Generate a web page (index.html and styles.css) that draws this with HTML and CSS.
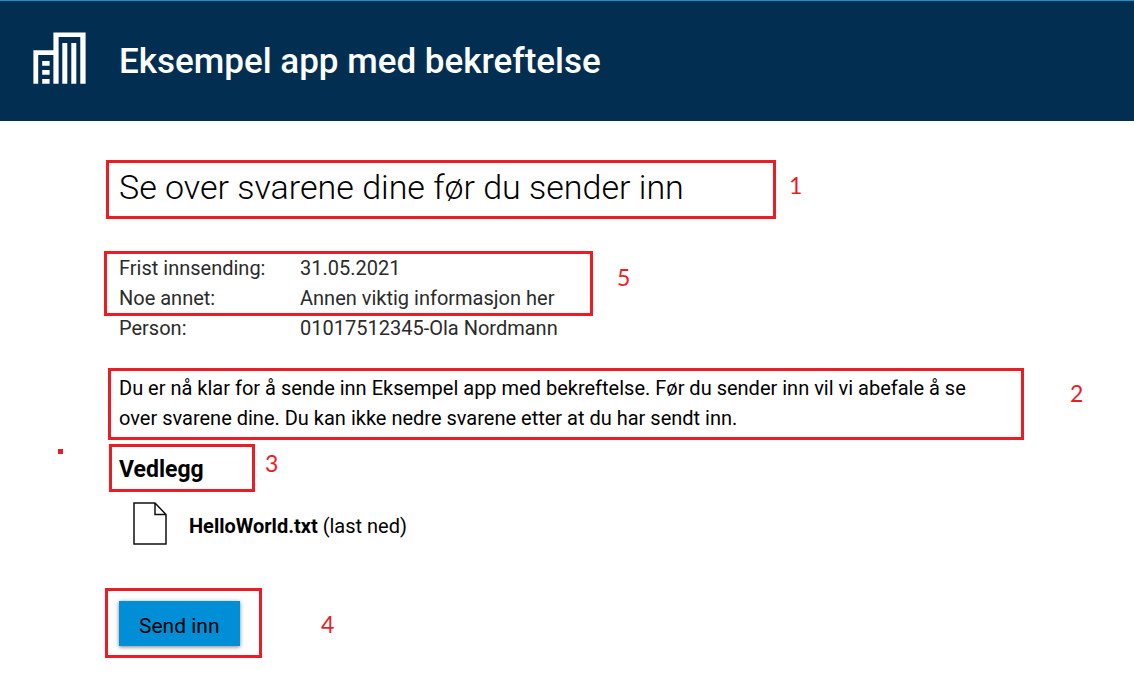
FILE: index.html
```html
<!DOCTYPE html>
<html lang="nb">
<head>
  <meta charset="utf-8">
  <meta name="viewport" content="width=device-width, initial-scale=1">
  <title>Eksempel app med bekreftelse</title>
  <link rel="stylesheet" href="styles.css">
</head>
<body>
  <header class="app-header">
    <svg class="app-logo" viewBox="0 0 53 52" aria-hidden="true">
      <path fill="#fff" d="M.4 51.700V18.200H20.400V.4H52.600V51.700H47.300V5H25.600V51.700H20.400V23H5.200V51.700Z"/>
      <path fill="#fff" d="M9.200 29h7.400v4.700H9.200zM9.200 38h7.400v4.700H9.200zM9.200 47h7.400v4.700H9.200zM29.300 11h5v40.700h-5zM38.300 11h5v40.700h-5z"/>
    </svg>
    <h1 class="app-title">Eksempel app med bekreftelse</h1>
  </header>

  <main class="page">
    <section class="marked">
      <h2 class="page-title">Se over svarene dine før du sender inn</h2>
      <div class="mark mark-title"><span class="mark-number">1</span></div>
    </section>

    <section class="marked summary-section">
      <table class="summary">
        <tbody>
          <tr><th scope="row">Frist innsending:</th><td>31.05.2021</td></tr>
          <tr><th scope="row">Noe annet:</th><td>Annen viktig informasjon her</td></tr>
          <tr><th scope="row">Person:</th><td>01017512345-Ola Nordmann</td></tr>
        </tbody>
      </table>
      <div class="mark mark-summary"><span class="mark-number">5</span></div>
    </section>

    <section class="marked intro-section">
      <p class="intro">Du er nå klar for å sende inn Eksempel app med bekreftelse. Før du sender inn vil vi abefale å se over svarene dine. Du kan ikke nedre svarene etter at du har sendt inn.</p>
      <div class="mark mark-intro"><span class="mark-number">2</span></div>
    </section>

    <section class="marked attachments-section">
      <h3 class="section-title">Vedlegg</h3>
      <div class="mark mark-attachments"><span class="mark-number">3</span></div>
      <div class="mark-dot"></div>
      <a class="file" href="#">
        <svg class="file-icon" viewBox="0 0 34 43" aria-hidden="true">
          <path fill="#fff" stroke="#111" stroke-width="1.5" d="M1 1H22L33 12.500V42H1ZM22 1V12.500H33"/>
        </svg>
        <span class="file-label"><strong>HelloWorld.txt</strong> (last ned)</span>
      </a>
    </section>

    <section class="marked submit-section">
      <button class="submit" type="button">Send inn</button>
      <div class="mark mark-submit"><span class="mark-number">4</span></div>
    </section>
  </main>
</body>
</html>
```
FILE: styles.css
```css
* {
  box-sizing: border-box;
}

body {
  margin: 0;
  background: #fff;
  color: #000;
  font-family: Roboto, "Liberation Sans", sans-serif;
  font-size: 20px;
  line-height: 30px;
}

h1,
h2,
h3,
p {
  margin: 0;
}

.app-header {
  display: flex;
  align-items: center;
  gap: 33px;
  padding: 31px 33px 29px;
  border-top: 1px solid #1c8fd0;
  background: #022f51;
  color: #fff;
}

.app-logo {
  width: 53px;
  height: 52px;
  margin-bottom: 8px;
}

.app-title {
  font-size: 35px;
  font-weight: 500;
  line-height: 60px;
}

.page {
  padding: 46px 119px 40px;
}

.page-title {
  font-size: 34px;
  font-weight: 300;
  line-height: 40px;
}

.summary-section {
  margin-top: 46px;
}

.summary {
  border-collapse: collapse;
  color: #2b2b2b;
}

.summary th,
.summary td {
  padding: 0;
  font-weight: 400;
  text-align: left;
}

.summary th {
  width: 181px;
}

.intro-section {
  margin-top: 30px;
}

.intro {
  padding-right: 20px;
}

.attachments-section {
  margin-top: 22px;
}

.section-title {
  font-size: 23px;
  font-weight: 700;
}

.file {
  display: flex;
  align-items: center;
  gap: 22px;
  width: fit-content;
  margin: 17px 0 0 14px;
  color: inherit;
  text-decoration: none;
}

.file-icon {
  width: 34px;
  height: 43px;
}

.file-label {
  padding-top: 4px;
}

.submit-section {
  display: flex;
  margin-top: 56px;
}

.submit {
  padding: 10px 20px 5px;
  border: 0;
  background: #008fd6;
  box-shadow: 0 1px 4px rgba(0, 0, 0, 0.5);
  color: #000;
  font: inherit;
  font-size: 21px;
  cursor: pointer;
}

/* Numbered callouts laid over the page */
.marked {
  position: relative;
}

.mark {
  position: absolute;
  border: 3px solid #ed1c24;
  pointer-events: none;
}

.mark-number {
  position: absolute;
  left: 100%;
  color: #ed1c24;
  font-family: Lato, sans-serif;
  font-size: 23px;
  line-height: 24px;
}

.mark-title {
  top: -7px;
  left: -13px;
  width: 670px;
  height: 59px;
}

.mark-title .mark-number {
  top: 10px;
  margin-left: 16px;
}

.mark-summary {
  top: -2px;
  left: -15px;
  width: 489px;
  height: 65px;
}

.mark-summary .mark-number {
  top: 11px;
  margin-left: 27px;
}

.mark-intro {
  top: -5px;
  left: -11px;
  width: 916px;
  height: 72px;
}

.mark-intro .mark-number {
  top: 10px;
  margin-left: 49px;
}

.mark-attachments {
  top: -11px;
  left: -10px;
  width: 146px;
  height: 48px;
}

.mark-attachments .mark-number {
  top: 4px;
  margin-left: 13px;
}

.mark-dot {
  position: absolute;
  top: -6px;
  left: -61px;
  width: 5px;
  height: 5px;
  background: #ed1c24;
}

.mark-submit {
  top: -13px;
  left: -14px;
  width: 157px;
  height: 70px;
}

.mark-submit .mark-number {
  top: 21px;
  margin-left: 62px;
}
```
